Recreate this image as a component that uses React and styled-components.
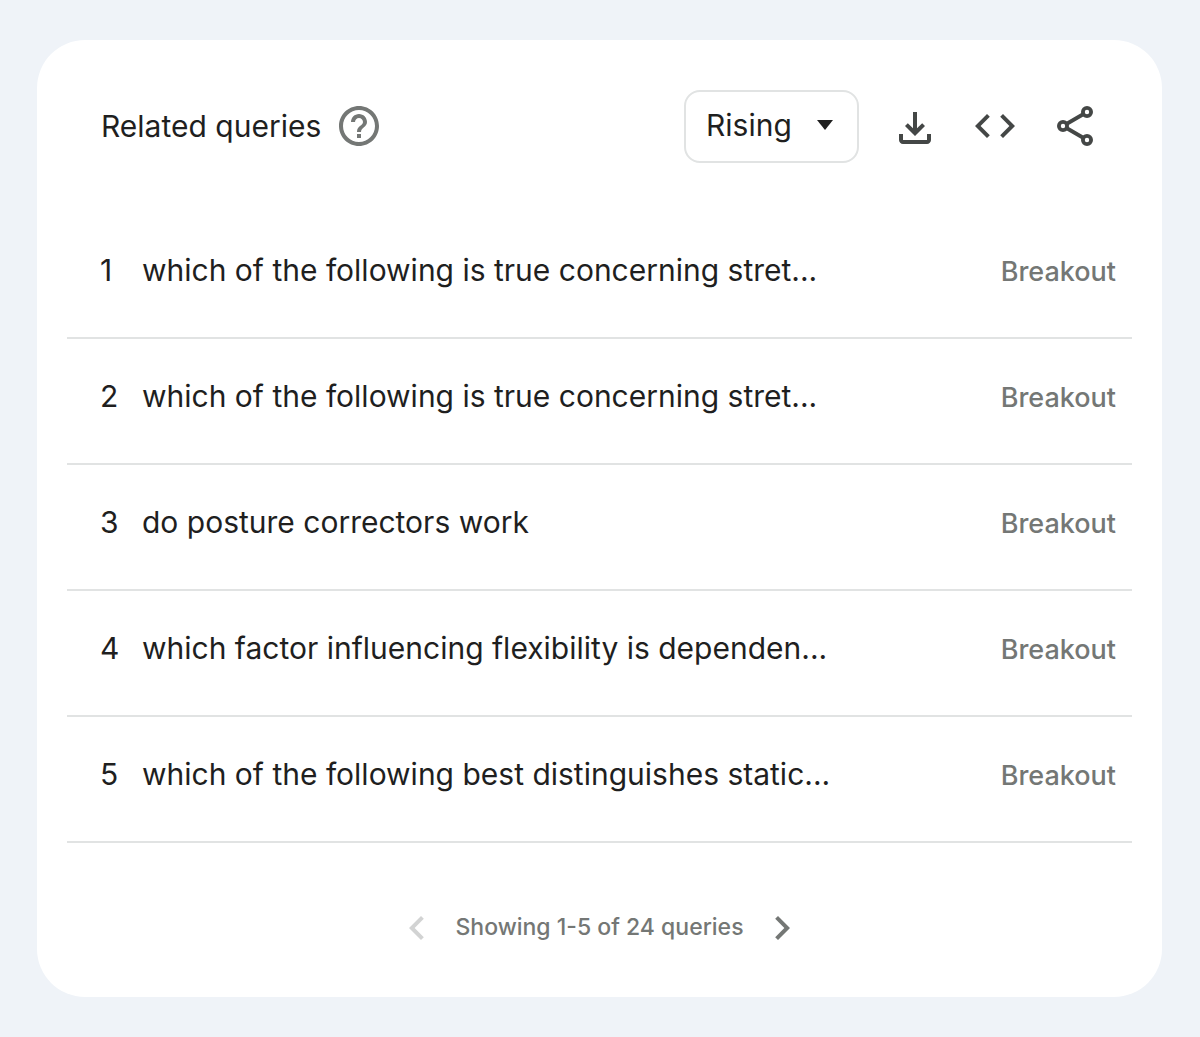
import React from "react";
import styled, { createGlobalStyle } from "styled-components";

const GlobalStyle = createGlobalStyle`
  * {
    box-sizing: border-box;
  }
  body {
    margin: 0;
    background-color: #eff3f8;
    color: #1f1f1f;
    font-family: Inter, "Liberation Sans", sans-serif;
  }
`;

const Page = styled.main`
  padding: 40px 38px 40px 37px;
`;

const Card = styled.section`
  background-color: white;
  border-radius: 48px;
  padding: 50px 30px 45px;
`;

const Header = styled.header`
  display: flex;
  align-items: center;
  justify-content: space-between;
  padding: 0 33px 0 34px;
`;

const TitleGroup = styled.div`
  display: flex;
  align-items: center;
  gap: 14px;
  padding-bottom: 2px;
`;

const Title = styled.h2`
  margin: 0;
  font-size: 30px;
  line-height: 40px;
  font-weight: 400;
`;

const Actions = styled.div`
  display: flex;
  align-items: center;
  gap: 32px;
`;

const IconGroup = styled.div`
  display: flex;
  gap: 32px;
  padding-bottom: 2px;
`;

const SelectBox = styled.div`
  display: grid;
  align-items: center;
  width: 175px;
  height: 73px;
`;

const Select = styled.select`
  grid-area: 1 / 1;
  appearance: none;
  width: 100%;
  height: 100%;
  padding: 0 56px 4px 20px;
  border: 2px solid #e1e3e3;
  border-radius: 16px;
  background-color: white;
  color: inherit;
  font-family: inherit;
  font-size: 30px;
  cursor: pointer;
`;

const Caret = styled.svg`
  grid-area: 1 / 1;
  justify-self: end;
  width: 16px;
  height: 10px;
  margin: 0 26px 4px 0;
  fill: #1f1f1f;
  pointer-events: none;
`;

const IconButton = styled.button`
  display: flex;
  padding: 0;
  border: none;
  border-radius: 50%;
  background: none;
  color: ${(props) => props.$color || "#444746"};
  cursor: pointer;
  &:disabled {
    color: #d2d3d3;
    cursor: default;
  }
`;

const Svg = styled.svg`
  display: block;
  width: 48px;
  height: 48px;
  fill: currentColor;
`;

const Table = styled.table`
  width: 100%;
  margin-top: 50px;
  border-collapse: separate;
  border-spacing: 0;
`;

const Cell = styled.td`
  height: 126px;
  padding: 0 0 10px;
  border-bottom: 2px solid #e1e3e3;
  font-size: 30px;
  line-height: 40px;
  white-space: nowrap;
`;

const Rank = styled(Cell)`
  width: 75px;
  padding-left: 33px;
`;

const Growth = styled(Cell)`
  padding-right: 16px;
  padding-bottom: 6px;
  color: #747775;
  font-size: 27px;
  font-weight: 500;
  text-align: right;
`;

const Pager = styled.nav`
  display: flex;
  align-items: center;
  justify-content: center;
  gap: 14px;
  margin-top: 61px;
`;

const PagerText = styled.span`
  padding-bottom: 2px;
  color: #747775;
  font-size: 23px;
  line-height: 32px;
  font-weight: 500;
`;

const icons = {
  help: "M11 18h2v-2h-2v2zm1-16C6.48 2 2 6.48 2 12s4.48 10 10 10 10-4.48 10-10S17.52 2 12 2zm0 18c-4.41 0-8-3.59-8-8s3.59-8 8-8 8 3.59 8 8-3.59 8-8 8zm0-14c-2.21 0-4 1.79-4 4h2c0-1.1.9-2 2-2s2 .9 2 2c0 2-3 1.75-3 5h2c0-2.25 3-2.5 3-5 0-2.21-1.79-4-4-4z",
  download:
    "M18 16v3H6v-3H4v3c0 1.1.9 2 2 2h12c1.1 0 2-.9 2-2v-3h-2zm-1-4l-1.41-1.41L13 13.17V5h-2v8.17l-2.59-2.58L7 12l5 5 5-5z",
  code: "M9.4 16.6L4.8 12l4.6-4.6L8 6l-6 6 6 6 1.4-1.4zm5.2 0l4.6-4.6-4.6-4.6L16 6l6 6-6 6-1.4-1.4z",
  prev: "M15.41 7.41L14 6l-6 6 6 6 1.41-1.41L10.83 12z",
  next: "M10 6L8.59 7.41 13.17 12l-4.58 4.59L10 18l6-6z",
};

const queries = [
  "which of the following is true concerning stret...",
  "which of the following is true concerning stret...",
  "do posture correctors work",
  "which factor influencing flexibility is dependen...",
  "which of the following best distinguishes static...",
];

const Icon = ({ name }) => (
  <Svg viewBox="0 0 24 24" aria-hidden="true">
    <path d={icons[name]} />
  </Svg>
);

const ShareIcon = () => (
  <Svg viewBox="0 0 24 24" aria-hidden="true">
    <g fill="none" stroke="currentColor" strokeWidth="1.9">
      <circle cx="18" cy="5" r="2.05" />
      <circle cx="6" cy="12" r="2.05" />
      <circle cx="18" cy="19" r="2.05" />
      <path d="M7.7 11l8.6-5M7.7 13l8.6 5" />
    </g>
  </Svg>
);

const App = () => {
  return (
    <Page>
      <GlobalStyle />
      <Card>
        <Header>
          <TitleGroup>
            <Title>Related queries</Title>
            <IconButton $color="#747775" aria-label="Help">
              <Icon name="help" />
            </IconButton>
          </TitleGroup>
          <Actions>
            <SelectBox>
              <Select aria-label="Sort queries" defaultValue="Rising">
                <option>Rising</option>
                <option>Top</option>
              </Select>
              <Caret viewBox="0 0 16 10" aria-hidden="true">
                <path d="M0 0h16l-8 10z" />
              </Caret>
            </SelectBox>
            <IconGroup>
              <IconButton aria-label="Download">
                <Icon name="download" />
              </IconButton>
              <IconButton aria-label="Embed">
                <Icon name="code" />
              </IconButton>
              <IconButton aria-label="Share">
                <ShareIcon />
              </IconButton>
            </IconGroup>
          </Actions>
        </Header>
        <Table aria-label="Related queries">
          <tbody>
            {queries.map((query, index) => (
              <tr key={index}>
                <Rank>{index + 1}</Rank>
                <Cell>{query}</Cell>
                <Growth>Breakout</Growth>
              </tr>
            ))}
          </tbody>
        </Table>
        <Pager aria-label="Pages">
          <IconButton aria-label="Previous" disabled>
            <Icon name="prev" />
          </IconButton>
          <PagerText>Showing 1-5 of 24 queries</PagerText>
          <IconButton $color="#747775" aria-label="Next">
            <Icon name="next" />
          </IconButton>
        </Pager>
      </Card>
    </Page>
  );
};

export default App;
